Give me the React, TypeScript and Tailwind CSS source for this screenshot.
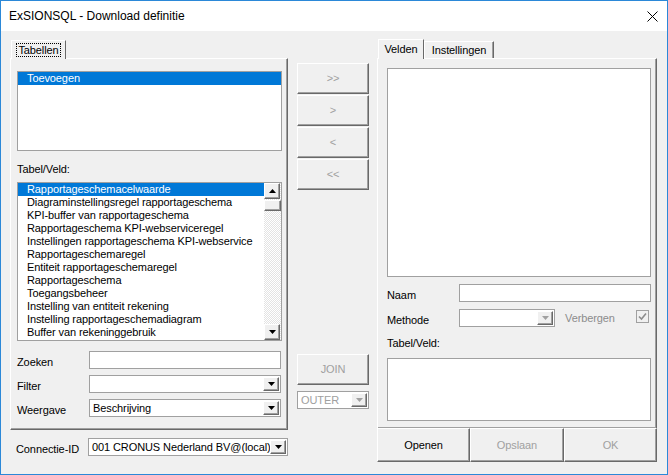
import React from 'react';

const tables = [
  'Rapportageschemacelwaarde',
  'Diagraminstellingsregel rapportageschema',
  'KPI-buffer van rapportageschema',
  'Rapportageschema KPI-webserviceregel',
  'Instellingen rapportageschema KPI-webservice',
  'Rapportageschemaregel',
  'Entiteit rapportageschemaregel',
  'Rapportageschema',
  'Toegangsbeheer',
  'Instelling van entiteit rekening',
  'Instelling rapportageschemadiagram',
  'Buffer van rekeninggebruik',
];

// classic raised 3D edge
const raised =
  'border border-t-white border-l-white border-r-[#696969] border-b-[#696969] shadow-[inset_-1px_-1px_0_#a0a0a0] bg-[#f0f0f0]';

const Triangle: React.FC<{ up?: boolean; disabled?: boolean }> = ({ up, disabled }) => (
  <svg width="7" height="4" viewBox="0 0 7 4">
    <polygon
      points={up ? '0,4 7,4 3.5,0' : '0,0 7,0 3.5,4'}
      fill={disabled ? '#a0a0a0' : '#000'}
    />
  </svg>
);

const ArrowBtn: React.FC<{ up?: boolean; disabled?: boolean }> = ({ up, disabled }) => (
  <div className={`${raised} w-[16px] h-full flex items-center justify-center`}>
    <Triangle up={up} disabled={disabled} />
  </div>
);

const Combo: React.FC<{ value?: string; width: string; disabled?: boolean }> = ({ value, width, disabled }) => (
  <div
    className={`${width} h-[18px] border border-[#a0a0a0] bg-white flex items-stretch p-[1px] ${
      disabled ? 'text-[#a0a0a0]' : 'text-black'
    }`}
  >
    <div className="flex-1 flex items-center pl-[2px] overflow-hidden whitespace-nowrap">{value}</div>
    <ArrowBtn disabled={disabled} />
  </div>
);

const Label: React.FC<{ children: React.ReactNode; className?: string }> = ({ children, className }) => (
  <div className={`w-[72px] pt-[5px] leading-[13px] ${className ?? ''}`}>{children}</div>
);

const MidButton: React.FC<{ label: string; className?: string }> = ({ label, className }) => (
  <div
    className={`${raised} w-[72px] h-[31px] flex items-center justify-center text-[#a0a0a0] ${className ?? ''}`}
  >
    {label}
  </div>
);

export default function App() {
  return (
    <div className="w-[668px] h-[475px] border border-[#2b88d8] flex flex-col font-['Liberation_Sans',Arial,sans-serif] text-[11px] tracking-[-0.1px] text-black bg-[#f0f0f0] overflow-hidden select-none">
      {/* title bar */}
      <div className="h-[30px] bg-white flex items-center justify-between pl-[8px] pr-[9px] shrink-0">
        <span className="text-[12px] tracking-normal leading-none">ExSIONSQL - Download definitie</span>
        <svg width="11" height="11" viewBox="0 0 11 11">
          <path d="M0.5 0.5 L10.5 10.5 M10.5 0.5 L0.5 10.5" stroke="#000" strokeWidth="1" />
        </svg>
      </div>

      {/* body */}
      <div className="flex-1 flex pl-[9px]">
        {/* left column */}
        <div className="w-[278px] flex flex-col pt-[9px]">
          <div className="h-[18px] flex items-end">
            <div className="relative z-10 ml-[1px] -mb-[1px] h-[19px] w-[55px] border border-b-0 border-t-white border-l-white border-r-[#696969] bg-[#f0f0f0] flex items-center justify-center">
              <span className="border border-dotted border-black px-[1px] leading-[12px]">Tabellen</span>
            </div>
          </div>
          <div className="h-[372px] border border-t-white border-l-white border-r-[#696969] border-b-[#696969] shadow-[inset_-1px_-1px_0_#a0a0a0] flex flex-col px-[6px]">
            <div className="mt-[12px] w-[265px] h-[80px] border border-[#a0a0a0] bg-white">
              <div className="h-[13px] bg-[#0078d7] text-white pl-[9px] leading-[13px]">Toevoegen</div>
            </div>
            <div className="mt-[12px] leading-[13px]">Tabel/Veld:</div>
            <div className="mt-[6px] w-[265px] h-[159px] border border-[#a0a0a0] bg-white flex">
              <div className="flex-1 flex flex-col overflow-hidden">
                {tables.map((t, i) => (
                  <div
                    key={t}
                    className={`h-[13px] leading-[13px] pl-[9px] whitespace-nowrap ${
                      i === 0 ? 'bg-[#0078d7] text-white' : ''
                    }`}
                  >
                    {t}
                  </div>
                ))}
              </div>
              <div className="w-[17px] flex flex-col bg-[repeating-conic-gradient(#ffffff_0%_25%,#e3e3e3_0%_50%)] bg-[length:2px_2px]">
                <div className="h-[16px]">
                  <ArrowBtn up />
                </div>
                <div className={`${raised} h-[11px] mt-[1px]`} />
                <div className="flex-1" />
                <div className="h-[16px]">
                  <ArrowBtn />
                </div>
              </div>
            </div>
            <div className="mt-[10px] flex">
              <Label>Zoeken</Label>
              <div className="w-[192px] h-[18px] border border-[#a0a0a0] bg-white" />
            </div>
            <div className="mt-[6px] flex">
              <Label>Filter</Label>
              <Combo width="w-[192px]" />
            </div>
            <div className="mt-[6px] flex">
              <Label>Weergave</Label>
              <Combo width="w-[192px]" value="Beschrijving" />
            </div>
          </div>
          <div className="mt-[8px] flex pl-[6px]">
            <Label>Connectie-ID</Label>
            <Combo width="w-[200px]" value="001 CRONUS Nederland BV@(local)" />
          </div>
        </div>

        {/* middle column */}
        <div className="ml-[9px] w-[72px] flex flex-col pt-[32px]">
          <MidButton label=">>" />
          <MidButton label=">" className="mt-[1px]" />
          <MidButton label="<" className="mt-[1px]" />
          <MidButton label="<<" className="mt-[1px]" />
          <MidButton label="JOIN" className="mt-[164px]" />
          <div className="mt-[6px]">
            <Combo width="w-[72px]" value="OUTER" disabled />
          </div>
        </div>

        {/* right column */}
        <div className="ml-[8px] w-[280px] flex flex-col pt-[8px]">
          <div className="h-[19px] flex items-end">
            <div className="relative z-10 ml-[1px] -mb-[1px] h-[20px] w-[46px] border border-b-0 border-t-white border-l-white border-r-[#696969] bg-[#f0f0f0] flex items-center justify-center">
              Velden
            </div>
            <div className="h-[17px] w-[70px] border border-b-0 border-t-white border-l-white border-r-[#696969] shadow-[inset_-1px_0_0_#a0a0a0] bg-[#f0f0f0] flex items-center justify-center">
              Instellingen
            </div>
          </div>
          <div className="h-[371px] border border-t-white border-l-white border-r-[#696969] border-b-[#696969] shadow-[inset_-1px_-1px_0_#a0a0a0] flex flex-col pl-[9px] pr-[5px]">
            <div className="mt-[9px] w-[264px] h-[209px] border border-[#a0a0a0] bg-white" />
            <div className="mt-[7px] flex">
              <Label className="pt-[4px]">Naam</Label>
              <div className="w-[192px] h-[18px] border border-[#a0a0a0] bg-white" />
            </div>
            <div className="mt-[7px] flex items-start">
              <Label className="pt-[4px]">Methode</Label>
              <Combo width="w-[96px]" disabled />
              <div className="ml-[10px] pt-[3px] leading-[13px] text-[#8c8c8c]">Verbergen</div>
              <div className="ml-auto mr-[2px] mt-[1px] w-[13px] h-[13px] border border-[#a0a0a0] bg-[#f0f0f0] flex items-center justify-center">
                <svg width="9" height="9" viewBox="0 0 9 9">
                  <path d="M1 4.5 L3.5 7 L8 1.5" stroke="#8c8c8c" strokeWidth="1.6" fill="none" />
                </svg>
              </div>
            </div>
            <div className="mt-[10px] leading-[13px]">Tabel/Veld:</div>
            <div className="mt-[8px] w-[264px] h-[63px] border border-[#a0a0a0] bg-white" />
          </div>
          <div className="flex h-[34px] -mt-[1px]">
            <div className={`${raised} w-[93px] flex items-center justify-center`}>Openen</div>
            <div className={`${raised} w-[94px] flex items-center justify-center text-[#a0a0a0]`}>Opslaan</div>
            <div className={`${raised} w-[93px] flex items-center justify-center text-[#a0a0a0]`}>OK</div>
          </div>
        </div>
      </div>
    </div>
  );
}
